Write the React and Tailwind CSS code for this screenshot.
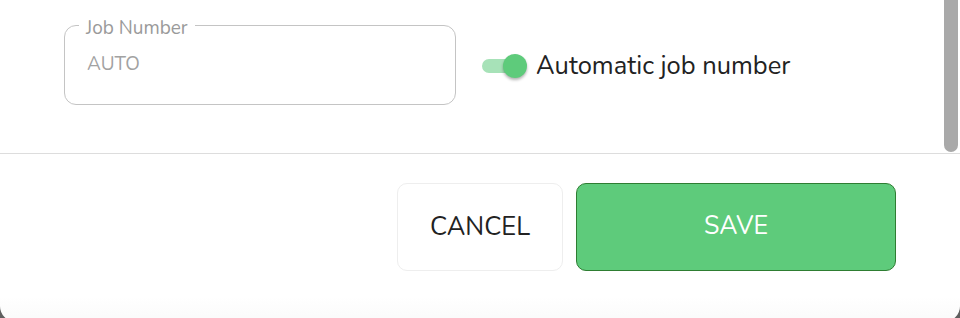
export default function App() {
  const font = { fontFamily: '"Nunito", Lato, "Noto Sans", sans-serif' };
  return (
    <div className="h-[318px] w-[960px] overflow-hidden bg-[#5f5f5f]" style={font}>
      <div className="flex h-[322px] w-[960px] flex-col rounded-b-[16px] bg-gradient-to-b from-white from-92% to-[#fafafa]">
        <div className="relative h-[153px] shrink-0">
          <div className="flex items-center pl-[64px] pt-[25px]">
            <div className="relative h-[80px] w-[392px] rounded-[12px] border border-[#c4c4c4]">
              <span className="absolute left-[14px] top-[-9px] bg-white px-[7px] text-[19px] leading-[22px] text-[#9a9a9a]">Job Number</span>
              <div className="pl-[22px] pt-[26px] text-[19px] leading-[24px] text-[#a2a2a2]">AUTO</div>
            </div>
            <div className="ml-[26px] mt-[1px] flex items-center">
              <div className="relative h-[14px] w-[38px] rounded-full bg-[#a7e2b8]">
                <div className="absolute left-[21px] top-[-5px] h-[24px] w-[24px] rounded-full bg-[#5ecb7b] shadow-[0_2px_3px_rgba(0,0,0,0.3)]" />
              </div>
              <span className="ml-[16px] text-[25.5px] leading-[30px] text-[#222222]">Automatic job number</span>
            </div>
          </div>
          <div className="absolute right-[2px] top-0 h-[152px] w-[14px] rounded-b-full bg-[#a9a9a9]" />
        </div>
        <div className="h-px shrink-0 bg-[#dddddd]" />
        <div className="flex justify-end gap-[13px] pr-[64px] pt-[29px]">
          <button className="h-[88px] w-[166px] rounded-[10px] border border-[#eeeeee] bg-white text-[25.5px] text-[#222222]">CANCEL</button>
          <button className="h-[88px] w-[320px] rounded-[10px] border border-[#2e7d32] bg-[#5ecb7b] text-[25px] text-white">SAVE</button>
        </div>
      </div>
    </div>
  );
}
